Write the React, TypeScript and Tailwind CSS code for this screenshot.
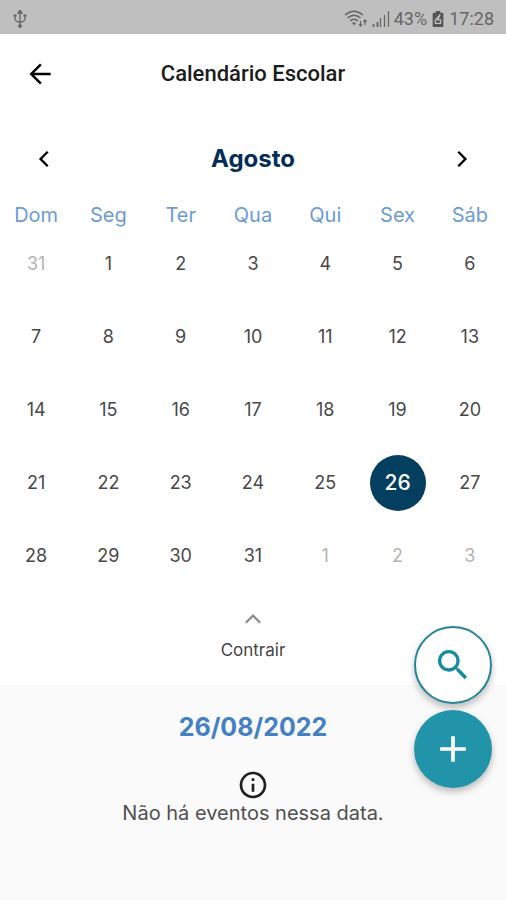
import { useState } from 'react';

const weekdays = ['Dom', 'Seg', 'Ter', 'Qua', 'Qui', 'Sex', 'Sáb'];

type Day = { day: number; outside?: boolean };

const days: Day[] = [
  { day: 31, outside: true },
  ...Array.from({ length: 31 }, (_, i) => ({ day: i + 1 })),
  { day: 1, outside: true },
  { day: 2, outside: true },
  { day: 3, outside: true },
];

const weeks = [0, 1, 2, 3, 4].map((w) => days.slice(w * 7, w * 7 + 7));

function StatusBar() {
  return (
    <div className="flex h-[34px] items-center justify-between bg-[#bfbfbf] px-3 pt-1 font-[Roboto,sans-serif] text-[#666]">
      <svg className="h-[18px] w-4" viewBox="0 0 16 18" fill="none" stroke="currentColor" strokeWidth="1.3">
        <path d="M8 2v13M3 5v3.500q0 3.500 5 3.500t5-3.500V5" />
        <path d="M8 0 6 3h4zM8 14.500v3" fill="currentColor" />
        <circle cx="8" cy="16" r="1.200" fill="currentColor" />
        <path d="M1.500 5.500h3M11.500 5.500h3" strokeWidth="2" />
      </svg>
      <div className="flex items-center gap-1">
        <svg className="h-[18px] w-6" viewBox="0 0 24 18" fill="none" stroke="currentColor" strokeWidth="1.500">
          <path d="M1 5q9-7.500 18 0M3.500 8q6.500-5.500 13 0M6 11q4-3.500 8 0" />
          <path d="m8 13 2 2.500 2-2.500q-2-1.500-4 0Z" fill="currentColor" stroke="none" />
          <path d="M16.500 11v5M15 14.300l1.500 1.700 1.500-1.700M21 15v-5M19.500 11.700 21 10l1.500 1.700" strokeWidth="1.200" />
        </svg>
        <svg className="h-[18px] w-[18px]" viewBox="0 0 18 18" fill="none" stroke="currentColor" strokeWidth="1.800">
          <path d="M1.500 17v-3M5.500 17v-5" />
          <path d="M8.500 17V8M12.500 17V5M16.500 17V1" strokeWidth="1.200" />
        </svg>
        <span className="text-[18px] leading-6">43%</span>
        <svg className="mx-px h-4 w-3 text-[#555]" viewBox="0 0 12 18">
          <path d="M3.500 0h5v2H11q1 0 1 1v14q0 1-1 1H1q-1 0-1-1V3q0-1 1-1h2.500z" fill="currentColor" />
          <path d="M8.500 4 3 10v4h6v-4H5.500z" fill="none" stroke="#bfbfbf" strokeWidth="1.400" />
        </svg>
        <span className="text-[18px] leading-6">17:28</span>
      </div>
    </div>
  );
}

export default function App() {
  const [selected, setSelected] = useState(26);

  return (
    <div className="flex min-h-screen flex-col bg-[#fafafa] font-[Inter,sans-serif]">
      <StatusBar />
      <div className="bg-white">
        <header className="grid h-20 grid-cols-[80px_1fr_80px] items-center">
          <button type="button" aria-label="Voltar" className="flex h-12 items-center justify-center text-black">
            <svg className="size-8" viewBox="0 0 24 24" fill="currentColor">
              <path d="M20 11.100H7.630l5.690-5.690L12 4.100 4.100 12l7.900 7.900 1.320-1.310L7.630 12.900H20z" />
            </svg>
          </button>
          <h1 className="text-center font-[Roboto,sans-serif] text-[22px] leading-7 font-medium text-[#1c1c1c]">
            Calendário Escolar
          </h1>
        </header>

        <div className="flex h-[89px] items-center justify-between px-5">
          <button type="button" aria-label="Mês anterior" className="flex size-12 items-center justify-center text-black">
            <svg className="size-8" viewBox="0 0 24 24" fill="currentColor">
              <path d="M15.410 7.210 14.200 6l-6 6 6 6 1.210-1.210L10.630 12z" />
            </svg>
          </button>
          <h2 className="text-[24px] leading-8 font-bold text-[#052e56]">Agosto</h2>
          <button type="button" aria-label="Próximo mês" className="flex size-12 items-center justify-center text-black">
            <svg className="size-8" viewBox="0 0 24 24" fill="currentColor">
              <path d="M9.800 6 8.590 7.210 13.370 12l-4.780 4.790L9.800 18l6-6z" />
            </svg>
          </button>
        </div>

        <table className="w-full table-fixed border-collapse">
          <thead>
            <tr>
              {weekdays.map((name) => (
                <th key={name} scope="col" className="h-6 p-0 text-center text-[20px] leading-6 font-normal text-[#6c9bcf]">
                  {name}
                </th>
              ))}
            </tr>
          </thead>
          <tbody>
            {weeks.map((week, w) => (
              <tr key={w}>
                {week.map(({ day, outside }) => {
                  const active = !outside && day === selected;
                  const tone = active
                    ? 'bg-[#043f60] text-[21px] font-medium text-white'
                    : outside
                      ? 'text-[18px] text-[#b3b3b3]'
                      : 'text-[18px] text-[#484848]';
                  return (
                    <td key={day} className="h-[73px] p-0">
                      <button
                        type="button"
                        onClick={() => !outside && setSelected(day)}
                        className={`mx-auto flex size-14 items-center justify-center rounded-full ${tone}`}
                      >
                        {day}
                      </button>
                    </td>
                  );
                })}
              </tr>
            ))}
          </tbody>
        </table>

        <button type="button" className="flex w-full flex-col items-center gap-2 pt-[14px] pb-[23px] text-[#444]">
          <svg className="size-6 text-[#8c8c8c]" viewBox="0 0 24 24" fill="currentColor">
            <path d="m12 8-8 8 1.600 1.600L12 11.200l6.400 6.400L20 16z" />
          </svg>
          <span className="text-[17px] leading-6">Contrair</span>
        </button>
      </div>

      <section className="flex flex-col items-center px-6 pt-7">
        <h3 className="text-[25px] leading-7 font-bold text-[#4480c5]">26/08/2022</h3>
        <svg className="mt-7 size-8 text-[#1f1f1f]" viewBox="0 0 24 24" fill="currentColor">
          <path d="M11 7h2v2h-2zm0 4h2v6h-2zm1-9C6.480 2 2 6.480 2 12s4.480 10 10 10 10-4.480 10-10S17.520 2 12 2zm0 18c-4.410 0-8-3.590-8-8s3.590-8 8-8 8 3.590 8 8-3.590 8-8 8z" />
        </svg>
        <p className="text-[20px] leading-6 text-[#505050]">Não há eventos nessa data.</p>
      </section>

      <div className="fixed right-[14px] bottom-28 flex flex-col gap-1.5">
        <button
          type="button"
          aria-label="Buscar"
          className="flex size-[78px] items-center justify-center rounded-full border-2 border-[#238597] bg-white text-[#168ba0] shadow-[0_4px_7px_rgba(0,0,0,0.25)]"
        >
          <svg className="size-10" viewBox="0 0 24 24" fill="currentColor">
            <path d="M15.500 14h-.79l-.28-.27C15.410 12.590 16 11.110 16 9.500 16 5.910 13.090 3 9.500 3S3 5.910 3 9.500 5.910 16 9.500 16c1.610 0 3.090-.59 4.230-1.570l.27.28v.79l5 4.990L20.490 19l-4.990-5zm-6 0C7.010 14 5 11.990 5 9.500S7.010 5 9.500 5 14 7.010 14 9.500 11.990 14 9.500 14z" />
          </svg>
        </button>
        <button
          type="button"
          aria-label="Adicionar"
          className="flex size-[78px] items-center justify-center rounded-full bg-[#2194a9] text-white shadow-[0_4px_7px_rgba(0,0,0,0.25)]"
        >
          <svg className="size-11" viewBox="0 0 24 24" fill="currentColor">
            <path d="M19 13h-6v6h-2v-6H5v-2h6V5h2v6h6v2z" />
          </svg>
        </button>
      </div>
    </div>
  );
}
